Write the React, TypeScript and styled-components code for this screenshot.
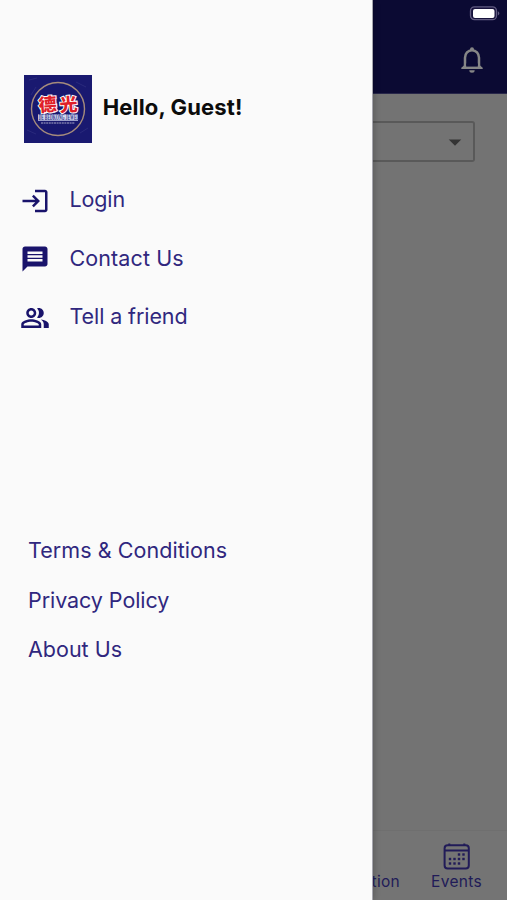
import React from "react";
import styled, { createGlobalStyle } from "styled-components";
import { MdLogin, MdMessage, MdOutlinePeopleAlt, MdArrowDropDown } from "react-icons/md";

const GlobalStyle = createGlobalStyle`
  * { box-sizing: border-box; }
  body { margin: 0; background: #737373; font-family: Inter, "Noto Sans", sans-serif; }
`;

const Screen = styled.div`
  display: grid;
  grid-template-columns: 372px 1fr;
  width: 507px;
  height: 900px;
  overflow: hidden;
`;

const Drawer = styled.aside`
  z-index: 1;
  display: flex;
  flex-direction: column;
  background: #fafafa;
  box-shadow: 1px 0 0 #a6a6ae, 2px 0 6px rgba(0, 0, 0, 0.22);
`;

const Profile = styled.header`
  display: flex;
  align-items: center;
  gap: 11.2px;
  height: 68px;
  margin: 75px 0 0 23.5px;
`;

const Greeting = styled.h1`
  margin: 0;
  padding-bottom: 4px;
  color: #0c0c0c;
  font-size: 22px;
  font-weight: 700;
  line-height: 28px;
  letter-spacing: 0.15px;
  white-space: nowrap;
`;

const Menu = styled.nav`
  display: flex;
  flex-direction: column;
  padding: 28px 0 0 20px;
`;

const MenuItem = styled.a`
  display: flex;
  align-items: center;
  gap: 19.5px;
  height: 58.7px;
  color: #19136b;
  svg { width: 30px; height: 30px; flex: none; margin-top: 0.5px; }
`;

const Label = styled.span<{ $spacing: number }>`
  color: #30277e;
  font-size: 21.5px;
  line-height: 28px;
  letter-spacing: ${(p) => p.$spacing}px;
  padding-bottom: 2.6px;
  white-space: nowrap;
`;

const Links = styled.nav`
  display: flex;
  flex-direction: column;
  padding: 179.6px 0 0 28px;
`;

const LinkItem = styled.a`
  display: flex;
  align-items: center;
  height: 49.6px;
`;

const Page = styled.main`
  display: flex;
  flex-direction: column;
  min-width: 0;
  background: #737373;
`;

const AppBar = styled.header`
  display: flex;
  flex-direction: column;
  align-items: flex-end;
  height: 94px;
  background: #0b0a33;
  border-bottom: 1px solid #28274a;
`;

const StatusIcon = styled.svg`
  width: 32px;
  height: 16px;
  margin: 5px 6px 0 0;
`;

const BellIcon = styled.svg`
  width: 24px;
  height: 28px;
  margin: 25px 23px 0 0;
`;

const Select = styled.div`
  display: flex;
  align-items: center;
  justify-content: flex-end;
  width: 103px;
  height: 41px;
  margin-top: 27px;
  padding-right: 3px;
  border: 2px solid #595959;
  border-left: 0;
  border-radius: 0 3px 3px 0;
  color: #343434;
  svg { width: 30px; height: 30px; }
`;

const BottomBar = styled.footer`
  display: flex;
  align-items: flex-start;
  justify-content: flex-end;
  height: 70px;
  margin-top: auto;
  border-top: 1px solid #6f6f6f;
  background: #747474;
  overflow: hidden;
`;

const Tab = styled.div`
  display: flex;
  flex: none;
  flex-direction: column;
  align-items: center;
  width: 101px;
  padding-top: 11px;
  color: #211b58;
  font-size: 15.5px;
  line-height: 20px;
  letter-spacing: 0.3px;
  svg { width: 30px; height: 30px; }
`;

const ClippedTab = styled(Tab)`
  align-items: flex-end;
  padding: 41px 6px 0 0;
`;

function Logo() {
  return (
    <svg width="68" height="68" viewBox="0 0 68 68">
      <rect width="68" height="68" fill="#191970" />
      <path d="M5 5l8-2M52 7l10 5M3 55l9 4M56 58l8-5M12 12l-5 8" stroke="#29297c" strokeWidth="1" />
      <circle cx="34" cy="34" r="26.5" fill="#18186f" stroke="#a58b7c" strokeWidth="1.4" />
      <g
        fill="#df2029"
        stroke="#fff"
        strokeWidth="2"
        paintOrder="stroke"
        fontFamily="'Noto Sans CJK TC', sans-serif"
        fontWeight="900"
        fontSize="18"
      >
        <text x="14.5" y="36" transform="rotate(-4 24 30)">德</text>
        <text x="35.5" y="36" transform="rotate(-4 45 30)">光</text>
      </g>
      <rect x="14" y="39.3" width="40" height="6.4" fill="#d5d9ef" />
      <text
        transform="translate(14.5 45) scale(0.51 1)"
        fill="#34368a" fontFamily="Liberation Serif, serif" fontWeight="700" fontSize="7.6"
      >DE BEDKONG JEWEL</text>
      <path d="M17 48h34" stroke="#aaa9c8" strokeWidth="1" strokeDasharray="2 .6" />
    </svg>
  );
}

function Bell() {
  return (
    <BellIcon viewBox="0 0 24 28" fill="none" stroke="#868686">
      <path d="M5 21.2V11.8C5 7.3 8 4.2 12 4.2s7 3.1 7 7.6v9.4" strokeWidth="2.5" />
      <path d="M12 1.2a2 2 0 0 1 2 2v1.4h-4V3.2a2 2 0 0 1 2-2zM1.3 23v-1.2l2.6-2.4h16.2l2.6 2.4V23z" fill="#868686" stroke="none" />
      <path d="M6.2 17.5h11.6v3.1H6.2z" fill="#0b0a33" stroke="none" />
      <path d="M9.3 24.3h5.4a2.7 2.5 0 0 1-5.4 0z" fill="#868686" stroke="none" />
    </BellIcon>
  );
}

function Calendar() {
  const dots = [
    [17, 12.5], [21.5, 12.5],
    [8, 17], [12.5, 17], [17, 17], [21.5, 17],
    [8, 21.5], [12.5, 21.5], [17, 21.5],
  ];
  return (
    <svg viewBox="0 0 30 30" fill="none" stroke="currentColor">
      <rect x="2.6" y="3.2" width="24.2" height="23.2" rx="3" strokeWidth="2" />
      <path d="M3 8.5h24M7.3 1.5V4M22.3 1.5V4" strokeWidth="2" />
      {dots.map(([x, y]) => (
        <rect key={`${x}-${y}`} x={x - 1.2} y={y - 1.2} width="2.4" height="2.4" fill="currentColor" stroke="none" />
      ))}
    </svg>
  );
}

const menu = [
  { icon: <MdLogin />, text: "Login", spacing: -0.12 },
  { icon: <MdMessage />, text: "Contact Us", spacing: 0.1 },
  { icon: <MdOutlinePeopleAlt />, text: "Tell a friend", spacing: -0.1 },
];

const links = [
  { text: "Terms & Conditions", spacing: 0.06 },
  { text: "Privacy Policy", spacing: -0.07 },
  { text: "About Us", spacing: 0 },
];

export default function App() {
  return (
    <>
      <GlobalStyle />
      <Screen>
        <Drawer>
          <Profile>
            <Logo />
            <Greeting>Hello, Guest!</Greeting>
          </Profile>
          <Menu>
            {menu.map((item) => (
              <MenuItem key={item.text}>
                {item.icon}
                <Label $spacing={item.spacing}>{item.text}</Label>
              </MenuItem>
            ))}
          </Menu>
          <Links>
            {links.map((item) => (
              <LinkItem key={item.text}>
                <Label $spacing={item.spacing}>{item.text}</Label>
              </LinkItem>
            ))}
          </Links>
        </Drawer>
        <Page>
          <AppBar>
            <StatusIcon viewBox="0 0 32 16">
              <rect x="1.5" y="1.9" width="26" height="12.8" rx="4" fill="#17123c" stroke="#625c82" strokeWidth="1.3" />
              <rect x="4" y="3.9" width="21.5" height="9" rx="2" fill="#fff" />
              <path d="M28.9 6.2q3 2.2 0 4.4z" fill="#625c82" />
            </StatusIcon>
            <Bell />
          </AppBar>
          <Select>
            <MdArrowDropDown />
          </Select>
          <BottomBar>
            <ClippedTab>Donation</ClippedTab>
            <Tab>
              <Calendar />
              Events
            </Tab>
          </BottomBar>
        </Page>
      </Screen>
    </>
  );
}
